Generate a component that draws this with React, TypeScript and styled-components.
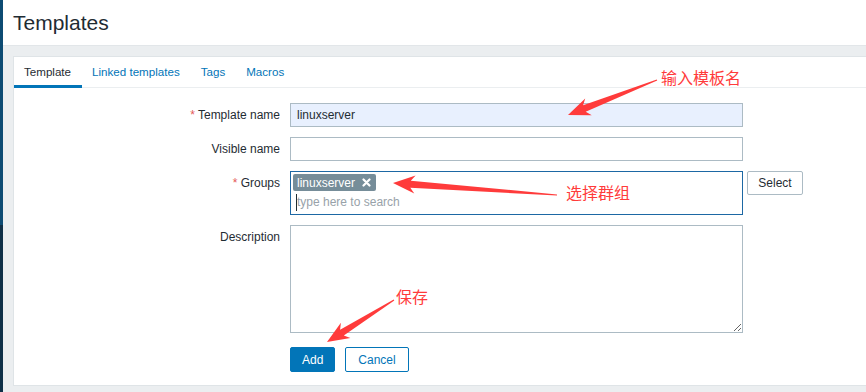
import React from "react";
import styled, { createGlobalStyle } from "styled-components";

const GlobalStyle = createGlobalStyle`
  html, body { margin: 0; padding: 0; background: #ebeef0; }
  body { font-family: "Liberation Sans", Arial, sans-serif; font-size: 12px; color: #1f2c33; }
  * { box-sizing: border-box; }
`;

const Page = styled.div`
  position: relative;
  display: flex;
  width: 866px;
  height: 392px;
  overflow: hidden;
`;

const Sidebar = styled.div`
  width: 3px;
  flex: none;
  background: linear-gradient(to bottom, #0d4b73 0, #0d4b73 225px, #0e2f47 225px, #0e2f47 100%);
`;

const Main = styled.div`
  flex: 1;
  display: flex;
  flex-direction: column;
  min-width: 0;
`;

const Header = styled.header`
  height: 46px;
  flex: none;
  background: #fff;
  border-bottom: 1px solid #e2e6e9;
  padding: 0 0 0 10px;
  display: flex;
  align-items: center;
`;

const Title = styled.h1`
  margin: 0;
  font-size: 21px;
  font-weight: normal;
  color: #1f2c33;
`;

const Content = styled.div`
  flex: 1;
  background: #ebeef0;
  padding: 10px 0 0 10px;
`;

const Card = styled.div`
  background: #fff;
  border: 1px solid #dfe4e7;
  border-right: none;
  height: 330px;
`;

const TabBar = styled.div`
  display: flex;
  height: 31px;
  border-bottom: 1px solid #ebeef0;
`;

const Tab = styled.div<{ $active?: boolean }>`
  padding: 1px 11px 0 10px;
  font-size: 11.6px;
  display: flex;
  align-items: center;
  color: ${(p) => (p.$active ? "#1f2c33" : "#0275b8")};
  border-bottom: 3px solid ${(p) => (p.$active ? "#0275b8" : "transparent")};
  margin-bottom: -1px;
`;

const Form = styled.div`
  display: grid;
  grid-template-columns: 266px 453px auto;
  column-gap: 10px;
  row-gap: 10px;
  padding-top: 15px;
  align-items: start;
`;

const Label = styled.label<{ $required?: boolean }>`
  text-align: right;
  line-height: 24px;
  font-size: 12px;
  color: #1f2c33;
  &::before {
    content: ${(p) => (p.$required ? '"* "' : '""')};
    color: #e45959;
  }
`;

const TextInput = styled.div<{ $filled?: boolean }>`
  height: 24px;
  border: 1px solid #acbbc4;
  background: ${(p) => (p.$filled ? "#e8f0fe" : "#fff")};
  padding: 0 6px;
  line-height: 22px;
  font-size: 12px;
  color: #1f2c33;
`;

const Multi = styled.div`
  height: 44px;
  border: 1px solid #1d68a4;
  padding: 2px 2px 0 2px;
  display: flex;
  flex-direction: column;
  align-items: flex-start;
`;

const Tag = styled.span`
  display: inline-flex;
  align-items: center;
  gap: 7px;
  height: 17px;
  padding: 0 5px 0 4px;
  background: #768d99;
  color: #fff;
  border-radius: 2px;
  font-size: 12px;
`;

const Placeholder = styled.div`
  margin: 3px 0 0 3px;
  height: 17px;
  line-height: 17px;
  color: #98a2a9;
  font-size: 12px;
  border-left: 1px solid #1f2c33;
`;

const GhostButton = styled.button`
  justify-self: start;
  margin-left: -6px;
  height: 24px;
  width: 56px;
  border: 1px solid #acbbc4;
  background: #fff;
  border-radius: 2px;
  font-family: "Liberation Sans", Arial, sans-serif;
  font-size: 12px;
  color: #1f2c33;
  padding: 0;
`;

const TextArea = styled.textarea`
  height: 108px;
  width: 453px;
  border: 1px solid #acbbc4;
  resize: both;
  margin: 0;
  display: block;
`;

const Buttons = styled.div`
  grid-column: 2;
  display: flex;
  gap: 10px;
  padding-top: 4px;
`;

const Button = styled.button<{ $primary?: boolean }>`
  height: 25px;
  padding: 0 ${(p) => (p.$primary ? 11 : 12)}px;
  border-radius: 2px;
  border: 1px solid #0275b8;
  background: ${(p) => (p.$primary ? "#0275b8" : "#fff")};
  color: ${(p) => (p.$primary ? "#fff" : "#0275b8")};
  font-family: "Liberation Sans", Arial, sans-serif;
  font-size: 12px;
`;

const Overlay = styled.svg`
  position: absolute;
  left: 0;
  top: 0;
  pointer-events: none;
`;

const Note = styled.span`
  position: absolute;
  font-family: "Noto Sans CJK SC", sans-serif;
  font-size: 16px;
  line-height: 20px;
  color: #ff3b3b;
  white-space: nowrap;
`;

type P = [number, number];

function arrowPoints(tail: P, tip: P): string {
  const dx = tip[0] - tail[0];
  const dy = tip[1] - tail[1];
  const len = Math.hypot(dx, dy);
  const ux = dx / len;
  const uy = dy / len;
  const nx = -uy;
  const ny = ux;
  const H = 22;
  const W = 9;
  const w = 3.5;
  const t = 0.6;
  const at = (d: number, s: number): string =>
    `${(tip[0] - ux * d + nx * s).toFixed(1)},${(tip[1] - uy * d + ny * s).toFixed(1)}`;
  return [
    at(len, t),
    at(H * 0.8, w),
    at(H, W),
    at(0, 0),
    at(H, -W),
    at(H * 0.8, -w),
    at(len, -t),
  ].join(" ");
}

const arrows: [P, P][] = [
  [[657, 80], [568, 115]],
  [[557, 195], [393, 183]],
  [[394, 300], [327, 342]],
];

const XIcon = () => (
  <svg width="9" height="9" viewBox="0 0 9 9">
    <path d="M1.5 1.5 L7.5 7.5 M7.5 1.5 L1.5 7.5" stroke="#fff" strokeWidth="2.2" strokeLinecap="round" />
  </svg>
);

export default function App() {
  return (
    <>
      <GlobalStyle />
      <Page>
        <Sidebar />
        <Main>
          <Header>
            <Title>Templates</Title>
          </Header>
          <Content>
            <Card>
              <TabBar>
                <Tab $active>Template</Tab>
                <Tab>Linked templates</Tab>
                <Tab>Tags</Tab>
                <Tab>Macros</Tab>
              </TabBar>
              <Form>
                <Label $required>Template name</Label>
                <TextInput $filled>linuxserver</TextInput>
                <span />
                <Label>Visible name</Label>
                <TextInput />
                <span />
                <Label $required>Groups</Label>
                <Multi>
                  <Tag>
                    linuxserver
                    <XIcon />
                  </Tag>
                  <Placeholder>type here to search</Placeholder>
                </Multi>
                <GhostButton>Select</GhostButton>
                <Label>Description</Label>
                <TextArea />
                <span />
                <Buttons>
                  <Button $primary>Add</Button>
                  <Button>Cancel</Button>
                </Buttons>
              </Form>
            </Card>
          </Content>
        </Main>
        <Overlay width="866" height="392" viewBox="0 0 866 392">
          {arrows.map(([a, b], i) => (
            <polygon key={i} points={arrowPoints(a, b)} fill="#ff3b3b" />
          ))}
        </Overlay>
        <Note style={{ left: 661, top: 67 }}>输入模板名</Note>
        <Note style={{ left: 566, top: 182 }}>选择群组</Note>
        <Note style={{ left: 396, top: 286 }}>保存</Note>
      </Page>
    </>
  );
}
